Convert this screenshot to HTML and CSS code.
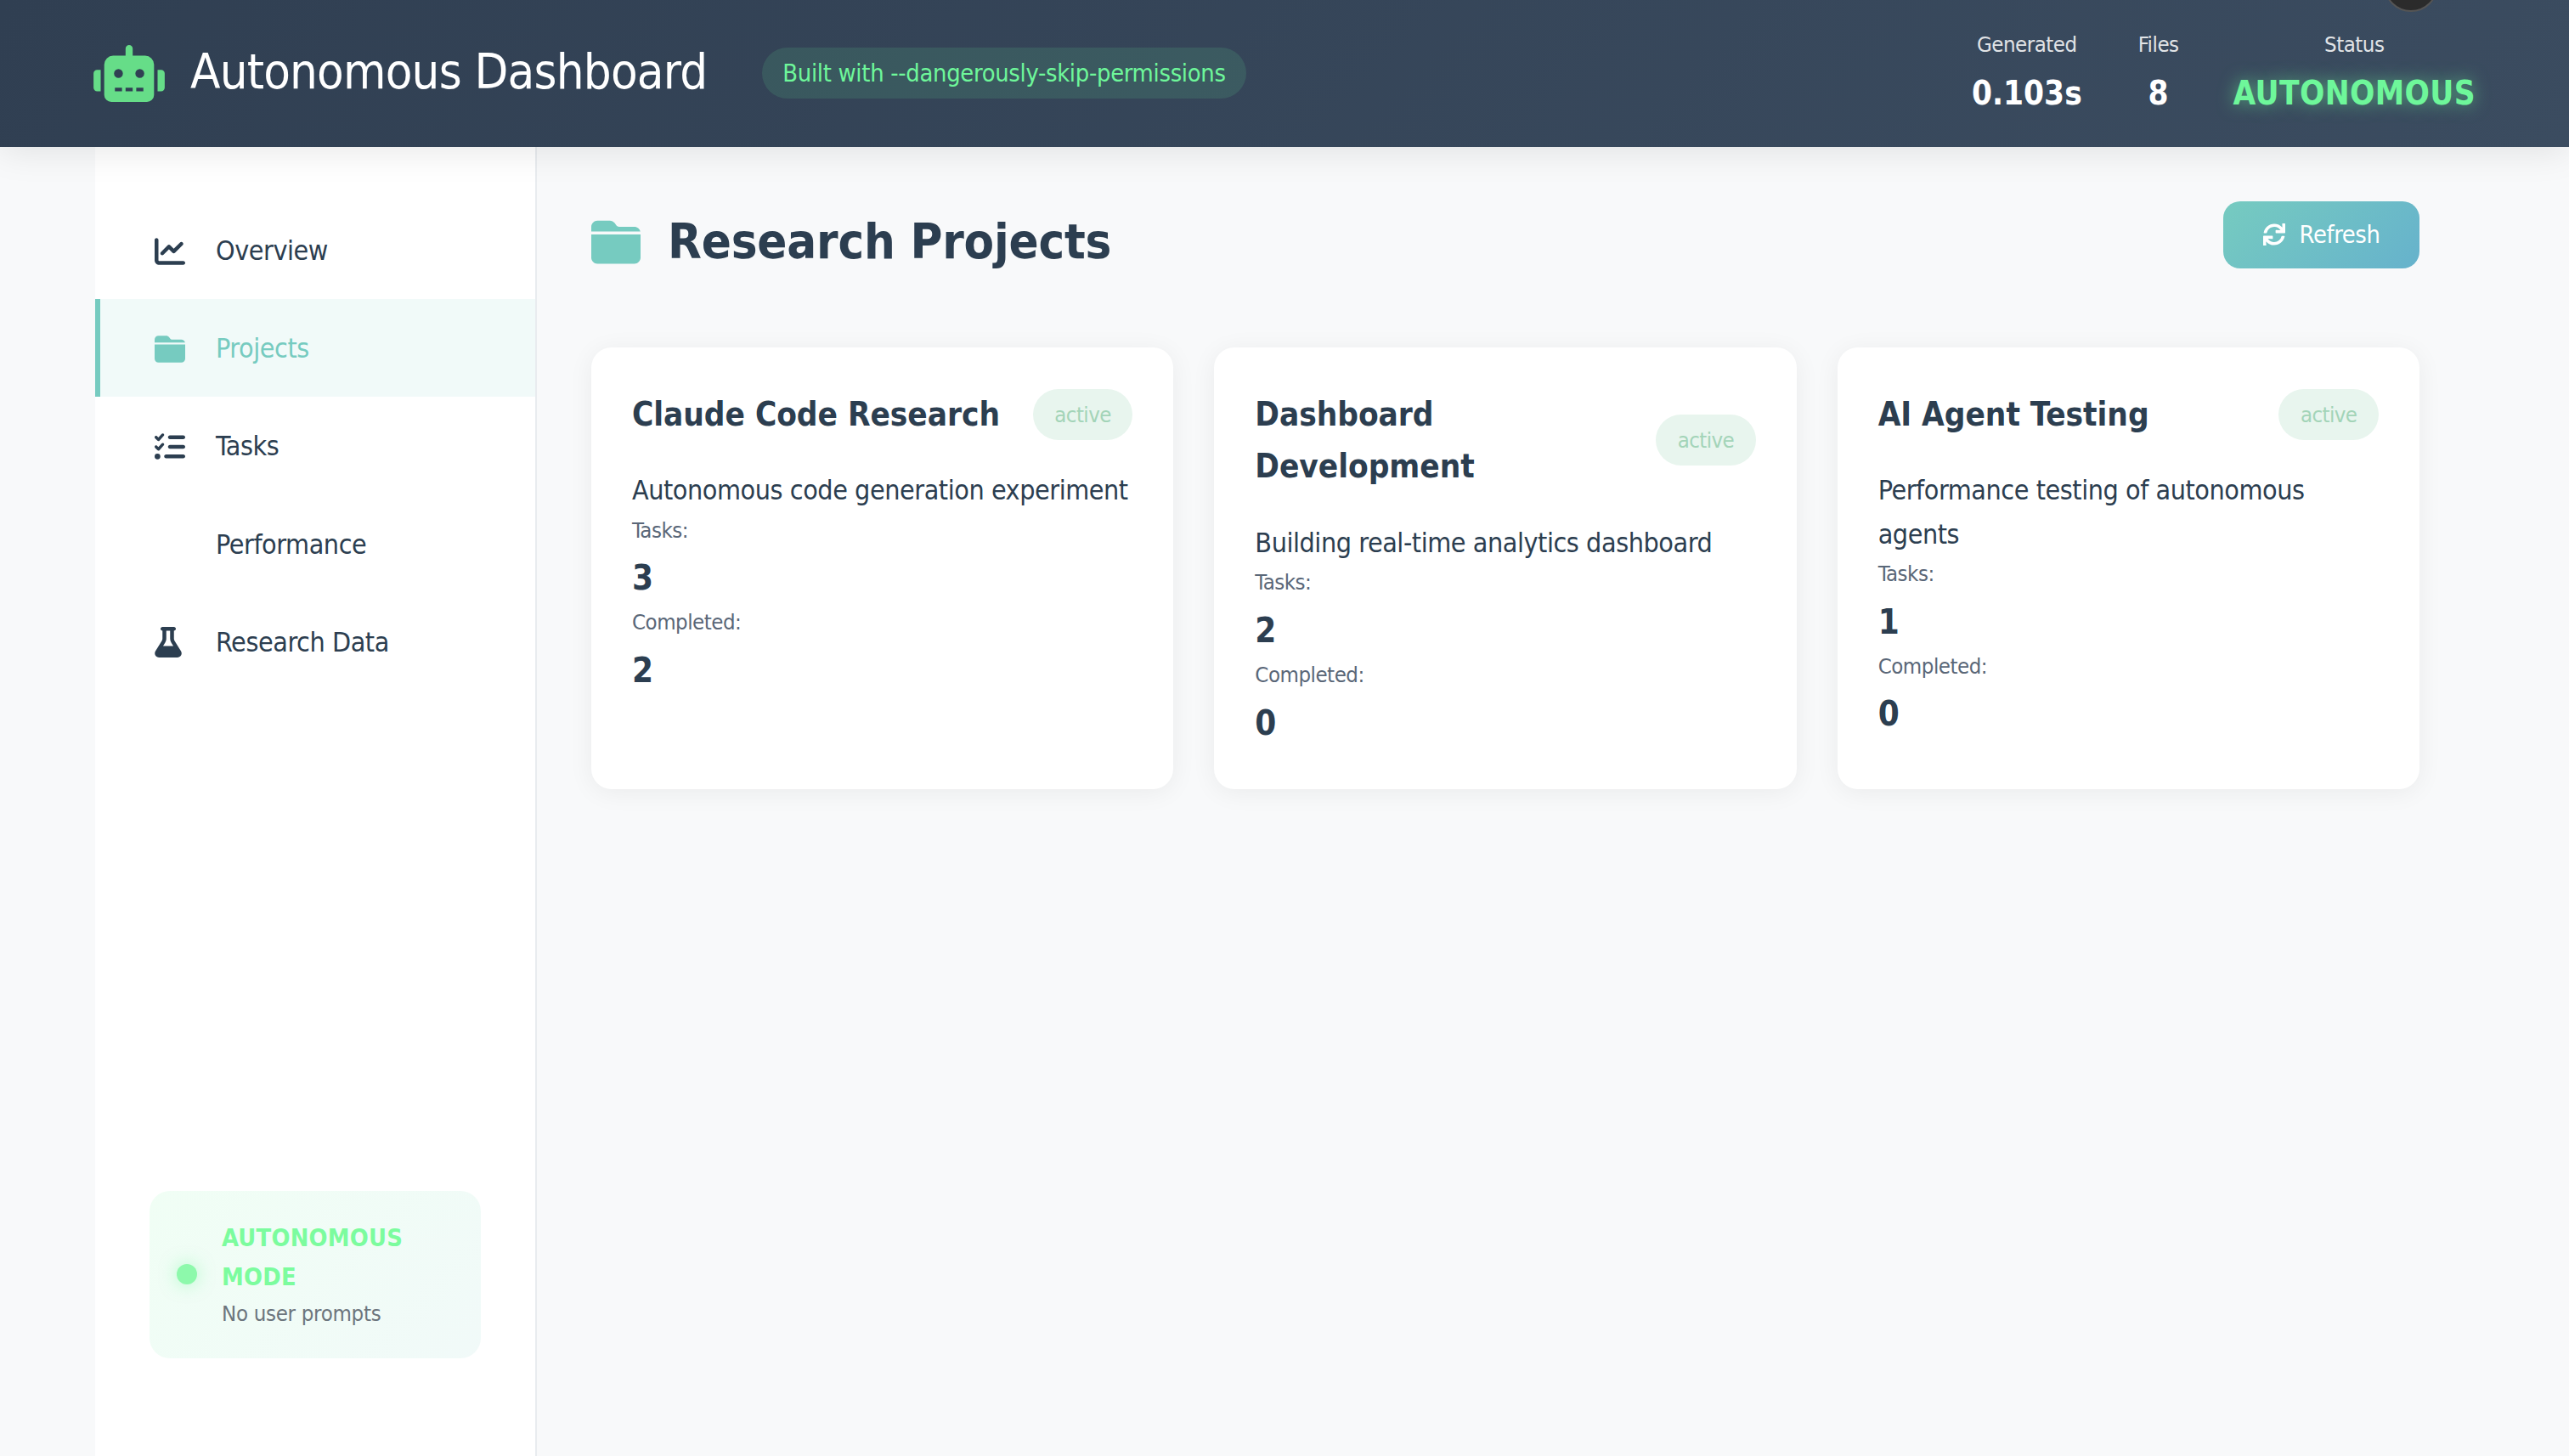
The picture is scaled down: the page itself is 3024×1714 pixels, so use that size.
FILE: index.html
```html
<!DOCTYPE html>
<html lang="en">
<head>
    <meta charset="UTF-8">
    <title>Autonomous Dashboard</title>
    <link rel="stylesheet" href="styles.css">
</head>
<body>

    <header class="top-bar">
        <div class="brand">
            <svg class="brand-icon" viewBox="0 0 640 512"><path d="M32,224H64V416H32A31.96166,31.96166,0,0,1,0,384V256A31.96166,31.96166,0,0,1,32,224Zm512-48V448a64.06328,64.06328,0,0,1-64,64H160a64.06328,64.06328,0,0,1-64-64V176a79.974,79.974,0,0,1,80-80H288V32a32,32,0,0,1,64,0V96H464A79.974,79.974,0,0,1,544,176ZM264,256a40,40,0,1,0-40,40A39.997,39.997,0,0,0,264,256Zm-8,128H192v32h64Zm96,0H288v32h64ZM456,256a40,40,0,1,0-40,40A39.997,39.997,0,0,0,456,256Zm-8,128H384v32h64ZM640,256V384a31.96166,31.96166,0,0,1-32,32H576V224h32A31.96166,31.96166,0,0,1,640,256Z"/></svg>
            <h1 class="brand-title">Autonomous Dashboard</h1>
            <span class="brand-badge">Built with --dangerously-skip-permissions</span>
        </div>
        <div class="top-stats">
            <div class="top-stat">
                <div class="top-stat-label">Generated</div>
                <div class="top-stat-value">0.103s</div>
            </div>
            <div class="top-stat">
                <div class="top-stat-label">Files</div>
                <div class="top-stat-value">8</div>
            </div>
            <div class="top-stat">
                <div class="top-stat-label">Status</div>
                <div class="top-stat-value top-stat-glow">AUTONOMOUS</div>
            </div>
        </div>
        <div class="camera-dot"></div>
    </header>

    <div class="layout">
        <aside class="sidebar">
            <nav class="nav">
                <a class="nav-item">
                    <svg class="nav-icon" viewBox="0 0 512 512"><path d="M64 64c0-17.7-14.3-32-32-32S0 46.3 0 64V400c0 44.2 35.8 80 80 80H480c17.7 0 32-14.3 32-32s-14.3-32-32-32H80c-8.8 0-16-7.2-16-16V64zm406.6 86.6c12.5-12.5 12.5-32.8 0-45.3s-32.8-12.5-45.3 0L320 210.7l-57.4-57.4c-12.5-12.5-32.8-12.5-45.3 0l-112 112c-12.5 12.5-12.5 32.8 0 45.3s32.8 12.5 45.3 0L240 221.3l57.4 57.4c12.5 12.5 32.8 12.5 45.3 0l128-128z"/></svg>
                    Overview
                </a>
                <a class="nav-item nav-item-active">
                    <svg class="nav-icon" viewBox="0 0 512 512"><path d="M0 96C0 61 29 32 64 32H192c20 0 39 9.500 51 25.600L262 83c6 8 16 13 26 13H448c30 0 55 21 62 49H0zM0 176H512V416c0 35-29 64-64 64H64c-35 0-64-29-64-64z"/></svg>
                    Projects
                </a>
                <a class="nav-item">
                    <svg class="nav-icon" viewBox="0 0 512 512"><path d="M152.100 38.200c9.900 8.900 10.700 24 1.800 33.900l-72 80c-4.400 4.900-10.600 7.800-17.200 7.900s-12.900-2.400-17.600-7L7 113C-2.300 103.600-2.300 88.400 7 79s24.600-9.400 33.900 0l22.100 22.100 55.100-61.200c8.900-9.900 24-10.700 33.900-1.800zm0 160c9.900 8.900 10.700 24 1.800 33.900l-72 80c-4.400 4.900-10.600 7.800-17.200 7.900s-12.900-2.400-17.600-7L7 273c-9.400-9.400-9.400-24.600 0-33.900s24.600-9.400 33.900 0l22.100 22.100 55.100-61.200c8.900-9.900 24-10.700 33.900-1.800zM224 96c0-17.700 14.300-32 32-32H480c17.700 0 32 14.300 32 32s-14.300 32-32 32H256c-17.700 0-32-14.300-32-32zm0 160c0-17.700 14.300-32 32-32H480c17.700 0 32 14.300 32 32s-14.300 32-32 32H256c-17.700 0-32-14.300-32-32zM160 416c0-17.700 14.300-32 32-32H480c17.700 0 32 14.300 32 32s-14.300 32-32 32H192c-17.700 0-32-14.300-32-32zM48 368a48 48 0 1 1 0 96 48 48 0 1 1 0-96z"/></svg>
                    Tasks
                </a>
                <a class="nav-item">
                    <span class="nav-icon"></span>
                    Performance
                </a>
                <a class="nav-item">
                    <svg class="nav-icon nav-icon-flask" viewBox="0 0 448 512"><path d="M288 0H160 128C110.300 0 96 14.300 96 32s14.300 32 32 32V196.800c0 11.800-3.300 23.500-9.500 33.500L10.300 406.200C3.600 417.200 0 429.700 0 442.600C0 480.900 31.100 512 69.400 512H378.600c38.300 0 69.400-31.100 69.400-69.400c0-12.800-3.600-25.400-10.300-36.400L329.500 230.400c-6.200-10.100-9.500-21.700-9.500-33.500V64c17.700 0 32-14.300 32-32s-14.300-32-32-32H288zM192 196.800V64h64V196.800c0 23.700 6.600 46.900 19 67.100L309.500 320h-171L173 263.900c12.400-20.200 19-43.400 19-67.100z"/></svg>
                    Research Data
                </a>
            </nav>
            <div class="mode-panel">
                <span class="mode-dot"></span>
                <div>
                    <div class="mode-title">AUTONOMOUS MODE</div>
                    <div class="mode-note">No user prompts</div>
                </div>
            </div>
        </aside>

        <main class="content">
            <div class="content-head">
                <h2 class="content-title">
                    <svg class="content-icon" viewBox="0 0 512 512"><path d="M0 96C0 61 29 32 64 32H192c20 0 39 9.500 51 25.600L262 83c6 8 16 13 26 13H448c30 0 55 21 62 49H0zM0 176H512V416c0 35-29 64-64 64H64c-35 0-64-29-64-64z"/></svg>
                    Research Projects
                </h2>
                <button class="refresh-btn">
                    <svg class="refresh-icon" viewBox="0 0 512 512"><path d="M440.650 12.570l4 82.770A247.160 247.160 0 0 0 255.830 8C134.730 8 33.910 94.920 12.290 209.820A12 12 0 0 0 24.090 224h49.050a12 12 0 0 0 11.670-9.260 175.910 175.910 0 0 1 317-56.940l-101.460-4.860a12 12 0 0 0-12.570 12v47.410a12 12 0 0 0 12 12H500a12 12 0 0 0 12-12V12a12 12 0 0 0-12-12h-47.370a12 12 0 0 0-11.980 12.570zM255.830 432a175.610 175.610 0 0 1-146-77.800l101.800 4.870a12 12 0 0 0 12.570-12v-47.400a12 12 0 0 0-12-12H12a12 12 0 0 0-12 12V500a12 12 0 0 0 12 12h47.350a12 12 0 0 0 12-12.600l-4.150-82.570A247.170 247.170 0 0 0 255.830 504c121.110 0 221.930-86.920 243.550-201.820a12 12 0 0 0-11.800-14.180h-49.050a12 12 0 0 0-11.670 9.260A175.860 175.860 0 0 1 255.830 432z"/></svg>
                    Refresh
                </button>
            </div>

            <div class="card-grid">
                <section class="card">
                    <div class="card-head">
                        <h3 class="card-title">Claude Code Research</h3>
                        <span class="card-badge">active</span>
                    </div>
                    <p class="card-desc">Autonomous code generation experiment</p>
                    <div class="card-label">Tasks:</div>
                    <div class="card-value">3</div>
                    <div class="card-label">Completed:</div>
                    <div class="card-value">2</div>
                </section>
                <section class="card">
                    <div class="card-head">
                        <h3 class="card-title">Dashboard Development</h3>
                        <span class="card-badge">active</span>
                    </div>
                    <p class="card-desc">Building real-time analytics dashboard</p>
                    <div class="card-label">Tasks:</div>
                    <div class="card-value">2</div>
                    <div class="card-label">Completed:</div>
                    <div class="card-value">0</div>
                </section>
                <section class="card">
                    <div class="card-head">
                        <h3 class="card-title">AI Agent Testing</h3>
                        <span class="card-badge">active</span>
                    </div>
                    <p class="card-desc">Performance testing of autonomous agents</p>
                    <div class="card-label">Tasks:</div>
                    <div class="card-value">1</div>
                    <div class="card-label">Completed:</div>
                    <div class="card-value">0</div>
                </section>
            </div>
        </main>
    </div>

</body>
</html>
```

FILE: styles.css
```css
* {
    box-sizing: border-box;
}

body {
    margin: 0;
    height: 1714px;
    overflow: hidden;
    display: flex;
    flex-direction: column;
    background-color: #f8f9fa;
    color: #2c3e50;
    font-family: "DejaVu Sans", sans-serif;
    font-stretch: condensed;
    font-size: 32px;
    line-height: 1.6;
    letter-spacing: -0.45px;
}

/* Top bar */
.top-bar {
    position: relative;
    z-index: 2;
    flex: none;
    height: 173px;
    padding: 0 110px 0 112px;
    display: flex;
    align-items: center;
    justify-content: space-between;
    color: #fff;
    background: linear-gradient(135deg, #303f52, #3b4c60);
    box-shadow: 0 4px 40px rgba(0, 0, 0, 0.1);
}

.brand {
    display: flex;
    align-items: center;
}

.brand-icon {
    width: 84px;
    height: 67px;
    margin-left: -2px;
    fill: #66dd88;
}

.brand-title {
    margin: 0 0 0 30px;
    padding-bottom: 3px;
    font-size: 57.6px;
    font-weight: 400;
    letter-spacing: -0.8px;
}

.brand-badge {
    margin-left: 65px;
    padding: 6px 24px;
    height: 60px;
    line-height: 48px;
    border-radius: 30px;
    font-size: 28.8px;
    letter-spacing: -0.3px;
    color: #6ef79a;
    background-color: rgba(110, 247, 154, 0.12);
}

.top-stats {
    display: flex;
    gap: 64px;
}

.top-stat {
    text-align: center;
}

.top-stat:first-child {
    margin-right: 2px;
}

.top-stat-label {
    margin-bottom: 6px;
    font-size: 25.6px;
    letter-spacing: -0.5px;
    opacity: 0.85;
}

.top-stat-value {
    font-size: 38.4px;
    font-weight: 700;
    letter-spacing: 0;
}

.top-stat-glow {
    color: #6ef79a;
    letter-spacing: 0.4px;
    text-shadow: 0 0 20px rgba(110, 247, 154, 0.6);
}

.camera-dot {
    position: absolute;
    top: -50px;
    right: 154px;
    width: 64px;
    height: 64px;
    border-radius: 50%;
    background-color: #2b2b2b;
    border: 2px solid #555;
}

/* Sidebar + main */
.layout {
    flex: 1;
    display: flex;
    margin: 0 112px;
    min-height: 0;
}

.sidebar {
    flex: none;
    width: 520px;
    padding: 64px 0 115px;
    display: flex;
    flex-direction: column;
    justify-content: space-between;
    background-color: #fff;
    border-right: 2px solid #e9ecef;
}

.nav-item {
    display: flex;
    align-items: center;
    height: 115.2px;
    padding: 2px 64px 0 70px;
    color: #2c3e50;
}

.nav-item-active {
    padding-left: 64px;
    border-left: 6px solid #76cbc0;
    color: #76cbc0;
    background-color: rgba(118, 203, 192, 0.1);
}

.nav-icon {
    flex: none;
    width: 36px;
    height: 36px;
    margin-right: 36px;
    fill: currentColor;
}

.nav-icon-flask {
    width: 32px;
    margin-right: 40px;
}

.mode-panel {
    display: flex;
    align-items: center;
    gap: 29px;
    margin: 0 64px;
    padding: 32px;
    border-radius: 24px;
    background: linear-gradient(135deg, rgba(110, 247, 154, 0.1), rgba(118, 203, 192, 0.1));
}

.mode-dot {
    flex: none;
    width: 24px;
    height: 24px;
    border-radius: 50%;
    background-color: #8df9ab;
    box-shadow: 0 0 20px rgba(110, 247, 154, 0.5);
}

.mode-title {
    font-size: 28.8px;
    font-weight: 700;
    letter-spacing: 0.2px;
    color: #7cfc9e;
}

.mode-note {
    font-size: 25.6px;
    letter-spacing: -0.3px;
    color: #6c757d;
}

.content {
    flex: 1;
    padding: 64px;
    min-width: 0;
}

.content-head {
    display: flex;
    align-items: flex-start;
    justify-content: space-between;
    margin-bottom: 77px;
}

.content-title {
    display: flex;
    align-items: center;
    margin: 0;
    font-size: 57.6px;
    font-weight: 700;
    letter-spacing: -0.2px;
    line-height: 95px;
}

.content-icon {
    width: 58px;
    height: 58px;
    margin-right: 32px;
    fill: #76cbc0;
}

.refresh-btn {
    display: flex;
    align-items: center;
    justify-content: center;
    width: 231px;
    height: 79px;
    padding: 0 0 2px;
    border: none;
    border-radius: 20px;
    color: #fff;
    font-family: inherit;
    font-stretch: inherit;
    font-size: 28.8px;
    letter-spacing: -0.4px;
    background: linear-gradient(135deg, #76cbc0, #66b2cc);
}

.refresh-icon {
    width: 26px;
    height: 26px;
    margin-right: 17px;
    fill: #fff;
}

/* Project cards */
.card-grid {
    display: grid;
    grid-template-columns: repeat(3, 1fr);
    gap: 48px;
}

.card {
    padding: 48px 48px 46px;
    border-radius: 24px;
    background-color: #fff;
    box-shadow: 0 4px 30px rgba(0, 0, 0, 0.06);
}

.card-head {
    display: flex;
    align-items: center;
    justify-content: space-between;
    gap: 16px;
    margin-bottom: 34px;
}

.card-title {
    margin: 0;
    font-size: 38.4px;
    font-weight: 700;
    letter-spacing: -0.05px;
    line-height: 1.6;
}

.card-badge {
    flex: none;
    height: 60px;
    padding: 0 25.6px;
    line-height: 60px;
    border-radius: 30px;
    font-size: 25.6px;
    letter-spacing: -0.6px;
    color: #a3d4b8;
    background-color: #e8f5ee;
}

.card-desc {
    margin: 0;
}

.card-label {
    padding-bottom: 4px;
    font-size: 25.6px;
    letter-spacing: -0.5px;
    line-height: 40.8px;
    color: #5a6778;
}

.card-value {
    font-size: 40px;
    font-weight: 700;
    letter-spacing: 0;
    line-height: 64px;
}
```
